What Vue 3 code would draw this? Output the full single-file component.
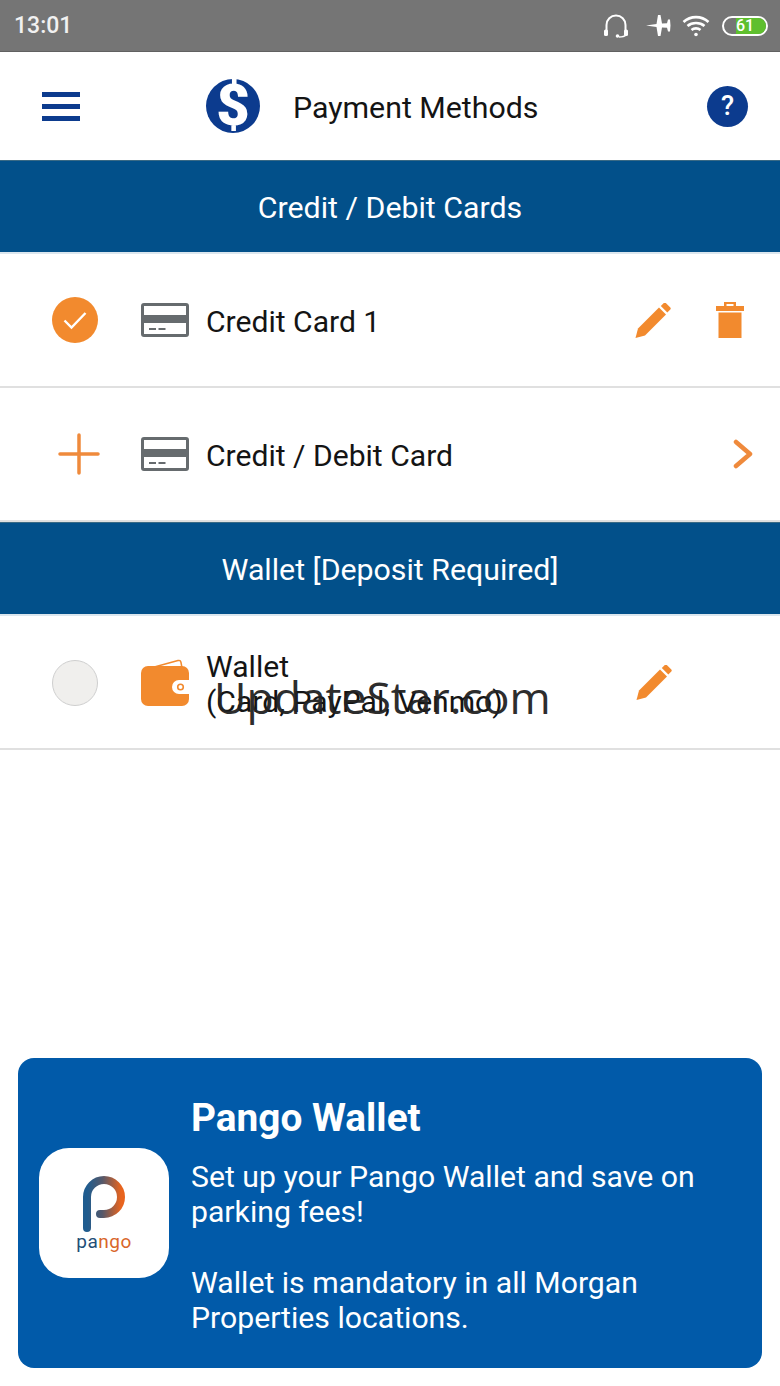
<template>
  <div class="screen">
    <div class="status">
      <span class="time">13:01</span>
      <div class="status-icons">
        <svg width="26" height="24" viewBox="0 0 26 24" fill="none">
          <path d="M3.500 18V11a9.500 9.500 0 0 1 19 0v7" stroke="#fff" stroke-width="2" />
          <rect x="1" y="15.500" width="4" height="6.500" rx="1.500" fill="#fff" />
          <rect x="21" y="15.500" width="4" height="6.500" rx="1.500" fill="#fff" />
          <path d="M23 21q-2 2-7 2" stroke="#fff" stroke-width="1.500" />
          <circle cx="14.500" cy="22" r="1.800" fill="#fff" />
        </svg>
        <svg class="plane" width="26" height="21" viewBox="0 0 26 21" fill="#fff">
          <path d="M0 10.500 10.500 9 12 0h2.500L16 8.500l5-.3 1-3.700h2l.5 6-.5 6h-2l-1-3.700-5-.3L14.500 21H12l-1.500-9z" />
        </svg>
        <svg width="28" height="22" viewBox="0 0 28 22" fill="none" stroke="#fff" stroke-width="2.600">
          <path d="M1.500 7c7-6.500 18-6.500 25 0" />
          <path d="M5.500 11c4.500-4 12.500-4 17 0" />
          <path d="M9.500 15c2.500-2.200 6.500-2.200 9 0" />
          <circle cx="14" cy="19.500" r="1.800" fill="#fff" stroke="none" />
        </svg>
        <div class="battery">
          <div class="battery-fill"></div>
          <span>61</span>
        </div>
      </div>
    </div>

    <header class="topbar">
      <div class="burger"><i></i><i></i><i></i></div>
      <div class="logo"><span>$</span></div>
      <div class="title">Payment Methods</div>
      <div class="help">?</div>
    </header>

    <div class="band">Credit / Debit Cards</div>

    <div class="row">
      <div class="lead">
        <div class="radio on">
          <svg width="26" height="24" viewBox="0 0 26 24" fill="none">
            <path d="M2.500 12.500 9.500 19.500 23.500 5" stroke="#fff" stroke-width="2.400" />
          </svg>
        </div>
      </div>
      <svg class="kind" width="48" height="34" viewBox="0 0 48 34">
        <rect x="1.500" y="1.500" width="45" height="31" rx="1.500" fill="#fff" stroke="#666b6e" stroke-width="3" />
        <rect x="1" y="12" width="46" height="8" fill="#666b6e" />
        <path d="M8 26h7M17.500 26h7" stroke="#666b6e" stroke-width="1.800" />
      </svg>
      <div class="label">Credit Card 1</div>
      <svg class="edit" width="36" height="36" viewBox="0 0 36 36" fill="#f28a2e">
        <path d="M0.500 35 3 25.500 24 4.500 31 11.500 10 32.500z" />
        <path d="M25.800 3l3-3a1.500 1.500 0 0 1 2 0l4.500 4.500a1.500 1.500 0 0 1 0 2l-3 3z" />
      </svg>
      <svg class="trash" width="28" height="36" viewBox="0 0 28 36" fill="#f28a2e" fill-rule="evenodd">
        <path d="M8 4V0h12v4h8v5H0V4zM10.500 4h7V2h-7zM2.500 10.500h23V36h-23z" />
      </svg>
    </div>

    <div class="row">
      <div class="lead">
        <svg class="plus" width="42" height="42" viewBox="0 0 42 42">
          <path d="M21 2v38M2 21h38" stroke="#ef8a3c" stroke-width="3.500" stroke-linecap="round" />
        </svg>
      </div>
      <svg class="kind" width="48" height="34" viewBox="0 0 48 34">
        <rect x="1.500" y="1.500" width="45" height="31" rx="1.500" fill="#fff" stroke="#666b6e" stroke-width="3" />
        <rect x="1" y="12" width="46" height="8" fill="#666b6e" />
        <path d="M8 26h7M17.500 26h7" stroke="#666b6e" stroke-width="1.800" />
      </svg>
      <div class="label">Credit / Debit Card</div>
      <svg class="chevron" width="20" height="30" viewBox="0 0 20 30" fill="none">
        <path d="M3 3 17 15 3 27" stroke="#ef8a3c" stroke-width="4.500" stroke-linecap="round" stroke-linejoin="round" />
      </svg>
    </div>

    <div class="band">Wallet [Deposit Required]</div>

    <div class="row">
      <div class="lead"><div class="radio radio-off"></div></div>
      <svg class="kind kind-wallet" width="48" height="48" viewBox="0 0 48 48">
        <path d="M6 10 37 1.500c1.500-.4 2.700.3 3 2L41 9" fill="#fff" stroke="#f28a2e" stroke-width="1.500" />
        <rect x="0" y="7" width="48" height="40" rx="7" fill="#f28a2e" />
        <path d="M48 21H38a7 7 0 0 0 0 14h10z" fill="#fff" />
        <circle cx="39.500" cy="28" r="2.800" fill="none" stroke="#f28a2e" stroke-width="1.600" />
      </svg>
      <div class="label">Wallet<br />(Card, PayPal, Venmo)</div>
      <svg class="edit edit-wallet" width="36" height="36" viewBox="0 0 36 36" fill="#f28a2e">
        <path d="M0.500 35 3 25.500 24 4.500 31 11.500 10 32.500z" />
        <path d="M25.800 3l3-3a1.500 1.500 0 0 1 2 0l4.500 4.500a1.500 1.500 0 0 1 0 2l-3 3z" />
      </svg>
      <div class="watermark">UpdateStar.com</div>
    </div>

    <div class="spacer"></div>

    <div class="promo">
      <div class="app-icon">
        <svg width="44" height="56" viewBox="0 0 44 56" fill="none">
          <defs>
            <linearGradient id="pangoGrad" x1="0" y1="0" x2="1" y2="0">
              <stop offset="0" stop-color="#1f5c8f" />
              <stop offset="0.45" stop-color="#55586a" />
              <stop offset="1" stop-color="#e8641e" />
            </linearGradient>
          </defs>
          <path d="M5 52V21a17 17 0 1 1 17 17h-4" stroke="url(#pangoGrad)" stroke-width="8" stroke-linecap="round" />
        </svg>
        <div class="app-name"><span>pa</span><b>ngo</b></div>
      </div>
      <div class="promo-text">
        <h2>Pango Wallet</h2>
        <p>Set up your Pango Wallet and save on parking fees!</p>
        <p>Wallet is mandatory in all Morgan Properties locations.</p>
      </div>
    </div>
  </div>
</template>

<script setup>
</script>

<style>
html,
body {
  margin: 0;
  background: #fff;
}
</style>

<style scoped>
.screen {
  width: 780px;
  height: 1386px;
  display: flex;
  flex-direction: column;
  overflow: hidden;
  background: #fff;
  font-family: Roboto, "Liberation Sans", sans-serif;
}

.status {
  height: 52px;
  flex: none;
  box-sizing: border-box;
  background: #757575;
  border-bottom: 1px solid #616161;
  display: flex;
  align-items: center;
  justify-content: space-between;
  padding: 0 12px 0 14px;
  color: #fff;
}

.time {
  font-size: 23px;
  font-weight: 500;
  color: #f1f1f1;
}

.status-icons {
  display: flex;
  align-items: center;
  gap: 10px;
}

.plane {
  margin-left: 7px;
}

.battery {
  position: relative;
  width: 46px;
  height: 20px;
  box-sizing: border-box;
  border: 2px solid #fff;
  border-radius: 10px;
  overflow: hidden;
  margin-left: 2px;
}

.battery-fill {
  position: absolute;
  top: 0;
  bottom: 0;
  right: 0;
  width: 30px;
  background: #5fbf2e;
}

.battery span {
  position: absolute;
  left: 12px;
  top: -1px;
  font-size: 16px;
  font-weight: 500;
  line-height: 18px;
  color: #fff;
}

.topbar {
  height: 108px;
  flex: none;
  display: flex;
  align-items: center;
}

.burger {
  margin-left: 42px;
  width: 38px;
  display: flex;
  flex-direction: column;
  gap: 7px;
}

.burger i {
  display: block;
  height: 5px;
  background: #0c3b8e;
}

.logo {
  margin-left: 126px;
  width: 54px;
  height: 54px;
  border-radius: 50%;
  background: #0c3b8e;
  color: #fff;
  font-size: 58px;
  font-weight: 900;
  line-height: 53px;
  text-align: center;
}

.logo span {
  display: block;
}

.title {
  margin-left: 33px;
  padding-top: 2px;
  font-size: 30.300px;
  color: #141414;
}

.help {
  margin-left: auto;
  margin-right: 32px;
  width: 41px;
  height: 41px;
  border-radius: 50%;
  background: #0c3b8e;
  color: #fff;
  font-size: 27px;
  font-weight: 500;
  line-height: 41px;
  text-align: center;
}

.band {
  height: 92px;
  flex: none;
  background: #02508a;
  box-shadow: inset 0 1px #3a6a85;
  color: #fff;
  font-size: 30.300px;
  line-height: 96px;
  text-align: center;
  border-bottom: 2px solid #dbe6ee;
}

.row {
  height: 134px;
  box-sizing: border-box;
  flex: none;
  display: flex;
  align-items: center;
  border-bottom: 2px solid #e0e0e0;
  position: relative;
}

.lead {
  width: 141px;
  flex: none;
  display: flex;
  justify-content: center;
  box-sizing: border-box;
  padding-left: 9px;
}

.plus {
  margin-left: 8px;
}

.radio {
  width: 46px;
  height: 46px;
  box-sizing: border-box;
  border-radius: 50%;
  background: #f0efed;
  border: 1px solid #cfcfcf;
  display: flex;
  align-items: center;
  justify-content: center;
}

.radio-off {
  margin-top: 2px;
}

.radio.on {
  background: #f28a2e;
  border: none;
}

.kind {
  flex: none;
}

.kind-wallet {
  margin-top: 2px;
}

.label {
  margin-left: 17px;
  margin-top: 3px;
  font-size: 30.100px;
  line-height: 35px;
  color: #141414;
  flex: 1;
}

.edit {
  margin-right: 45px;
  margin-top: 2px;
}

.trash {
  margin-right: 36px;
}

.edit-wallet {
  margin-right: 108px;
}

.chevron {
  margin-right: 27px;
}

.watermark {
  position: absolute;
  left: 214px;
  top: 52px;
  font-family: "Open Sans", sans-serif;
  font-size: 44.500px;
  line-height: 58px;
  color: #222;
  opacity: 0.95;
}

.spacer {
  flex: 1;
}

.promo {
  flex: none;
  height: 310px;
  margin: 0 18px 18px;
  box-sizing: border-box;
  background: #015aa9;
  border-radius: 16px;
  display: flex;
  align-items: center;
  padding: 0 40px 0 21px;
  color: #fff;
}

.app-icon {
  width: 130px;
  height: 130px;
  flex: none;
  background: #fff;
  border-radius: 30px;
  display: flex;
  flex-direction: column;
  align-items: center;
  justify-content: center;
}

.app-name {
  font-size: 19px;
  line-height: 16px;
  margin-top: 2px;
  letter-spacing: 0.5px;
  color: #1f4f78;
}

.app-name b {
  font-weight: 400;
  color: #d9662a;
}

.promo-text {
  margin-left: 22px;
  padding-top: 3px;
}

.promo-text h2 {
  margin: 0 0 18px;
  font-size: 38.800px;
  font-weight: 700;
  line-height: 46px;
}

.promo-text p {
  margin: 0 0 36px;
  font-size: 30.200px;
  line-height: 35px;
}

.promo-text p:last-child {
  margin-bottom: 0;
}
</style>
